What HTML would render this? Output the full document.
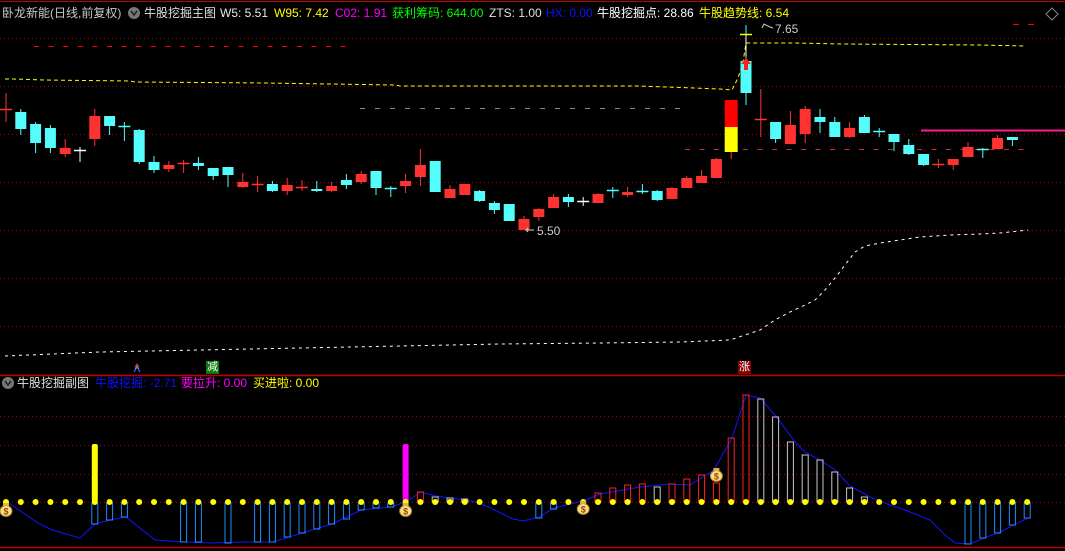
<!DOCTYPE html>
<html><head><meta charset="utf-8">
<style>
html,body{margin:0;padding:0;background:#000;width:1065px;height:551px;overflow:hidden}
.t{position:absolute;font-family:"Liberation Sans","Noto Sans CJK SC",sans-serif;font-size:12px;white-space:nowrap;line-height:14px}
svg{position:absolute;left:0;top:0}
</style></head><body>
<svg id="s" width="1065" height="551" xmlns="http://www.w3.org/2000/svg">
<line x1="0" y1="1.5" x2="1065" y2="1.5" stroke="#c00000"/>
<g stroke="#a00000" stroke-dasharray="1,3">
<line x1="0" y1="38.5" x2="1065" y2="38.5"/><line x1="0" y1="86.5" x2="1065" y2="86.5"/>
<line x1="0" y1="134.5" x2="1065" y2="134.5"/><line x1="0" y1="182.5" x2="1065" y2="182.5"/>
<line x1="0" y1="230.5" x2="1065" y2="230.5"/><line x1="0" y1="278.5" x2="1065" y2="278.5"/>
<line x1="0" y1="326.5" x2="1065" y2="326.5"/>
<line x1="0" y1="416.5" x2="1065" y2="416.5"/><line x1="0" y1="445.5" x2="1065" y2="445.5"/>
<line x1="0" y1="474.5" x2="1065" y2="474.5"/><line x1="0" y1="502.5" x2="1065" y2="502.5"/>
</g>
<line x1="0" y1="375.5" x2="1065" y2="375.5" stroke="#c00000" stroke-width="1.5"/>
<line x1="0" y1="547.5" x2="1065" y2="547.5" stroke="#c00000" stroke-width="1.5"/>
<line x1="34" y1="46.5" x2="352" y2="46.5" stroke="#ff0000" stroke-dasharray="5,9.6"/>
<line x1="1013" y1="24.5" x2="1036" y2="24.5" stroke="#ff0000" stroke-dasharray="6,9"/>
<line x1="360" y1="108.5" x2="680" y2="108.5" stroke="#888" stroke-dasharray="5,10"/>
<line x1="685" y1="149.5" x2="1025" y2="149.5" stroke="#c03030" stroke-dasharray="5,9.5"/>
<line x1="921" y1="130.5" x2="1065" y2="130.5" stroke="#ff1a8c" stroke-width="2"/>
<polyline fill="none" stroke="#ffff00" stroke-dasharray="4,3" points="5,79 14,79 44,80 130,81 135,82 265,83 395,85 400,86 640,86 720,89 732,90 738,78 743,62 746,43 796,43 843,44 980,45 1025,46"/>
<polyline fill="none" stroke="#fff" stroke-dasharray="3,4" points="5,356 100,352 200,350 300,348 400,346 500,344 600,343 680,342 730,340 745,335 760,330 775,320 790,312 805,305 815,300 825,290 835,278 845,265 855,252 865,246 880,243 900,240 920,237 950,235 980,234 1000,233 1028,230"/>
<polyline fill="none" stroke="#1414ff" points="6,502 10,504 38,523 52,530 80,538 95,524 110,520 126,517 155,540 184,542 213,543 241,542 273,542 302,533 332,524 361,510 391,507 406,502 421,492 436,496 465,500 480,503 513,519 523,521 539,517 554,508 583,501 600,494 640,487 670,484 690,485 714,470 732,438 746,395 760,398 775,415 795,442 805,452 820,460 835,470 850,486 870,497 890,505 905,510 930,520 945,535 955,543 970,544 984,538 1000,532 1028,518"/>
<g id="c"></g>
<line x1="746" y1="35" x2="746" y2="56" stroke="#fff"/><line x1="740" y1="34.5" x2="752" y2="34.5" stroke="#ff0" stroke-width="1.5"/>
<path d="M746 58 L741 64 L744 64 L744 70 L748 70 L748 64 L751 64Z" fill="#ff2020"/>
<path d="M762 28 L764 24 L770 27 L773 28" fill="none" stroke="#ccc"/>
<path d="M534 230 L526 230 M528 228 L526 230 L528 232" fill="none" stroke="#ccc"/>
<rect x="206" y="361" width="13" height="13" fill="#0a7a0a"/>
<rect x="738" y="361" width="13" height="13" fill="#8a0000"/>
<path d="M134 372 L137 367 L140 372 M135 369 L137 366 L139 369" fill="none" stroke="#5080ff"/>
<path d="M135 367 L137 364 L139 367" fill="none" stroke="#ff3030"/>
<circle cx="8" cy="383" r="6" fill="#777"/><path d="M5 381 L8 385 L11 381" fill="none" stroke="#222" stroke-width="1.5"/>
<circle cx="134" cy="13" r="6" fill="#777"/><path d="M131 11 L134 15 L137 11" fill="none" stroke="#222" stroke-width="1.5"/>
<path d="M1052 8 L1058 14 L1052 20 L1046 14Z" fill="none" stroke="#888"/>
</svg>
<div class="t" style="left:2px;top:6px;color:#c8c8c8">卧龙新能(日线,前复权)</div>
<div class="t" style="left:144px;top:6px;color:#e0e0e0">牛股挖掘主图</div>
<div class="t" style="left:220px;top:6px;color:#e8e8e8">W5: 5.51</div>
<div class="t" style="left:274px;top:6px;color:#ffff00">W95: 7.42</div>
<div class="t" style="left:335px;top:6px;color:#ff00ff">C02: 1.91</div>
<div class="t" style="left:392px;top:6px;color:#00ff00">获利筹码: 644.00</div>
<div class="t" style="left:489px;top:6px;color:#e0e0e0">ZTS: 1.00</div>
<div class="t" style="left:546px;top:6px;color:#1010ff">HX: 0.00</div>
<div class="t" style="left:597px;top:6px;color:#fff">牛股挖掘点: 28.86</div>
<div class="t" style="left:699px;top:6px;color:#ffff00">牛股趋势线: 6.54</div>
<div class="t" style="left:775px;top:22px;color:#ccc">7.65</div>
<div class="t" style="left:537px;top:224px;color:#ccc">5.50</div>
<div class="t" style="left:207px;top:360px;color:#fff;font-size:11px">减</div>
<div class="t" style="left:739px;top:360px;color:#fff;font-size:11px">涨</div>
<div class="t" style="left:17px;top:376px;color:#e0e0e0">牛股挖掘副图</div>
<div class="t" style="left:95px;top:376px;color:#1010ff">牛股挖掘: -2.71</div>
<div class="t" style="left:181px;top:376px;color:#ff00ff">要拉升: 0.00</div>
<div class="t" style="left:253px;top:376px;color:#ffff00">买进啦: 0.00</div>
<script>
var NS="http://www.w3.org/2000/svg",g=document.getElementById('c');
function el(n,a){var e=document.createElementNS(NS,n);for(var k in a)e.setAttribute(k,a[k]);g.appendChild(e);return e;}
function X(i){return 6+14.8*i;}
var col={r:"#ff3232",c:"#54fcfc",w:"#ffffff"};
var C=[[0,109,109,93,122,'r'],[1,112,129,109,135,'c'],[2,124,143,122,153,'c'],[3,128,148,125,153,'c'],[4,148,154,139,157,'r'],[5,150,150,147,162,'w'],[6,116,139,109,146,'r'],[7,116,126,116,135,'c'],[8,126,126,122,141,'c'],[9,130,162,129,164,'c'],[10,162,170,156,173,'c'],[11,165,169,161,172,'r'],[12,163,163,160,173,'r'],[13,163,166,157,170,'c'],[14,168,176,168,180,'c'],[15,167,175,167,187,'c'],[16,182,187,173,188,'r'],[17,184,184,176,192,'r'],[18,184,191,181,192,'c'],[19,185,191,178,195,'r'],[20,187,187,180,191,'r'],[21,189,191,181,192,'c'],[22,186,191,182,192,'r'],[23,180,185,174,189,'c'],[24,174,182,171,184,'r'],[25,171,188,171,195,'c'],[26,188,188,186,197,'c'],[27,181,186,174,193,'r'],[28,165,177,149,186,'r'],[29,161,192,161,192,'c'],[30,189,198,185,198,'r'],[31,184,195,184,195,'r'],[32,191,201,190,202,'c'],[33,203,210,201,214,'c'],[34,204,221,204,221,'c'],[35,219,230,216,230,'r'],[36,209,217,208,221,'r'],[37,197,208,194,208,'r'],[38,197,202,194,207,'c'],[39,201,201,197,206,'w'],[40,194,203,193,203,'r'],[41,190,190,187,198,'c'],[42,192,195,187,197,'r'],[43,191,191,184,194,'c'],[44,191,200,190,201,'c'],[45,188,199,187,199,'r'],[46,178,188,176,188,'r'],[47,176,183,170,183,'r'],[48,159,178,158,178,'r'],[50,61,93,25,105,'c'],[51,119,119,89,137,'r'],[52,122,139,122,143,'c'],[53,125,144,111,143,'r'],[54,109,134,106,143,'r'],[55,117,122,109,133,'c'],[56,122,137,117,137,'c'],[57,128,137,122,138,'r'],[58,117,133,115,133,'c'],[59,131,131,128,137,'c'],[60,134,142,134,151,'c'],[61,145,154,139,155,'c'],[62,154,165,154,166,'c'],[63,164,164,159,168,'r'],[64,159,165,159,170,'r'],[65,147,157,142,157,'r'],[66,149,149,148,158,'c'],[67,138,149,135,149,'r'],[68,137,140,137,146,'c']];
C.forEach(function(d){var x=X(d[0]),c=col[d[5]];el('line',{x1:x,x2:x,y1:d[3],y2:d[4],stroke:c});
 if(d[2]-d[1]<1)el('line',{x1:x-6,x2:x+6,y1:d[1]+.5,y2:d[1]+.5,stroke:c,'stroke-width':1.5});
 else el('rect',{x:x-5.5,y:d[1],width:11,height:d[2]-d[1],fill:c});});
var x=X(49);el('line',{x1:x,x2:x,y1:150,y2:159,stroke:'#ff3232'});el('rect',{x:x-6.5,y:100,width:13,height:27,fill:'#ff0000'});el('rect',{x:x-6.5,y:127,width:13,height:25,fill:'#ffff00'});
// sub bars
var B={6:524,7:520,8:517,12:542,13:542,15:543,17:542,18:542,19:537,20:533,21:529,22:524,23:519,24:510,25:508,26:507,36:518,37:509,65:544,66:538,67:533,68:525,69:518};
for(var i in B){var bx=X(+i);el('rect',{x:bx-3,y:503,width:6,height:B[i]-503,fill:'none',stroke:'#1e8cff'});}
var U={28:[492,'r'],29:[497,'g'],30:[498,'g'],31:[499,'g'],40:[493,'r'],41:[488,'r'],42:[485,'r'],43:[484,'r'],44:[487,'g'],45:[484,'r'],46:[479,'r'],47:[475,'r'],48:[483,'r'],49:[438,'r'],50:[395,'r'],51:[399,'g'],52:[417,'g'],53:[442,'g'],54:[455,'g'],55:[460,'g'],56:[472,'g'],57:[488,'g'],58:[497,'g']};
for(var i in U){var bx=X(+i);el('rect',{x:bx-3,y:U[i][0],width:6,height:502-U[i][0],fill:'none',stroke:U[i][1]=='r'?'#ff2020':'#c8c8c8'});}
el('rect',{x:X(6)-3,y:444,width:6,height:58,rx:2,fill:'#ffff00'});
el('rect',{x:X(27)-3,y:444,width:6,height:58,rx:2,fill:'#ff00ff'});
for(var i=0;i<70;i++){el('circle',{cx:X(i),cy:502,r:3,fill:'#ffff00'});}
[[0,510],[27,510],[39,508],[48,475]].forEach(function(m){var mx=X(m[0]),my=m[1];
 el('ellipse',{cx:mx,cy:my+1,rx:6,ry:5.5,fill:'#f5e08a',stroke:'#b08020'});
 el('rect',{x:mx-3,y:my-7,width:6,height:3,fill:'#e0b040'});
 var t=el('text',{x:mx,y:my+4.5,'font-size':'9','font-family':'Liberation Sans',fill:'#a04000','text-anchor':'middle','font-weight':'bold'});t.textContent='$';});
</script>
</body></html>
